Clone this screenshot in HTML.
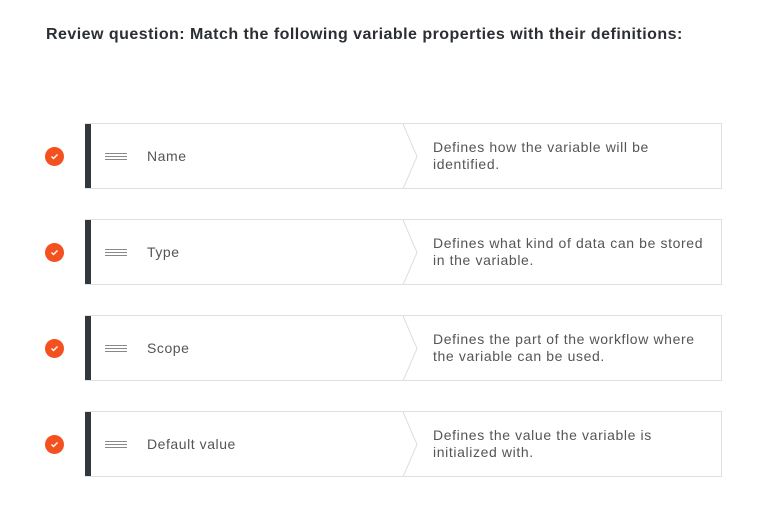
<!DOCTYPE html><html><head><style>
body{margin:0;width:776px;height:519px;background:#fff;font-family:"Liberation Sans",sans-serif;position:relative;overflow:hidden}
h1{position:absolute;left:46px;top:26px;margin:0;font-size:16px;font-weight:bold;color:#2b2f33;letter-spacing:0.47px}
.row{position:absolute;left:85px;width:636px;height:64px;border:1px solid #e0e0e0;border-left:none;box-sizing:content-box}
.bar{position:absolute;left:0;top:0;width:6px;height:64px;background:#33383c}
.ham{position:absolute;left:20px;top:29px;width:22px;height:7px;border-top:1px solid #888;border-bottom:1px solid #888;box-sizing:border-box}
.ham:after{content:"";position:absolute;left:0;top:2px;width:22px;height:1px;background:#888}
.lab{position:absolute;left:62px;top:24px;font-size:14px;color:#555;letter-spacing:0.55px}
.def{position:absolute;left:348px;top:15px;font-size:14px;color:#555;line-height:17px;width:285px;letter-spacing:0.62px}
svg.ch{position:absolute;left:316px;top:0}
.ok{position:absolute;left:45px;width:19px;height:19px;border-radius:50%;background:#f4511e}
</style></head><body>
<h1>Review question: Match the following variable properties with their definitions:</h1>
<div class="ok" style="top:147px"><svg width="19" height="19"><path d="M6.5 9.5l2 2 4-4" stroke="#fff" stroke-width="1.4" fill="none"/></svg></div>
<div class="row" style="top:123px"><div class="bar"></div><div class="ham"></div><div class="lab">Name</div><svg class="ch" width="20" height="65"><path d="M2 0L16 32.5 2 65" stroke="#ddd" fill="none"/></svg><div class="def">Defines how the variable will be<br>identified.</div></div>
<div class="ok" style="top:243px"><svg width="19" height="19"><path d="M6.5 9.5l2 2 4-4" stroke="#fff" stroke-width="1.4" fill="none"/></svg></div>
<div class="row" style="top:219px"><div class="bar"></div><div class="ham"></div><div class="lab">Type</div><svg class="ch" width="20" height="65"><path d="M2 0L16 32.5 2 65" stroke="#ddd" fill="none"/></svg><div class="def">Defines what kind of data can be stored<br>in the variable.</div></div>
<div class="ok" style="top:339px"><svg width="19" height="19"><path d="M6.5 9.5l2 2 4-4" stroke="#fff" stroke-width="1.4" fill="none"/></svg></div>
<div class="row" style="top:315px"><div class="bar"></div><div class="ham"></div><div class="lab">Scope</div><svg class="ch" width="20" height="65"><path d="M2 0L16 32.5 2 65" stroke="#ddd" fill="none"/></svg><div class="def">Defines the part of the workflow where<br>the variable can be used.</div></div>
<div class="ok" style="top:435px"><svg width="19" height="19"><path d="M6.5 9.5l2 2 4-4" stroke="#fff" stroke-width="1.4" fill="none"/></svg></div>
<div class="row" style="top:411px"><div class="bar"></div><div class="ham"></div><div class="lab">Default value</div><svg class="ch" width="20" height="65"><path d="M2 0L16 32.5 2 65" stroke="#ddd" fill="none"/></svg><div class="def">Defines the value the variable is<br>initialized with.</div></div>
</body></html>
